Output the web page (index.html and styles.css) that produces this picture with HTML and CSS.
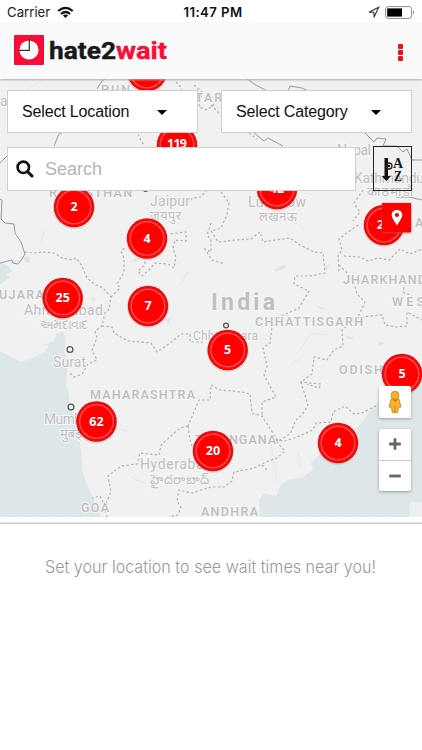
FILE: index.html
```html
<!DOCTYPE html>
<html lang="en">
<head>
<meta charset="utf-8">
<meta name="viewport" content="width=device-width, initial-scale=1">
<title>hate2wait</title>
<link rel="stylesheet" href="styles.css">
</head>
<body>
<div class="status">
  <div class="carrier"><span>Carrier</span>
    <svg width="17" height="13" viewBox="0 0 17 13"><g fill="none" stroke="#111" stroke-width="2.3"><path d="M1.3 5Q8.5-1.3 15.7 5M4 8Q8.500 4 13 8"/></g><path d="M5.900 9.400Q8.500 7.400 11.100 9.400L8.500 12Z" fill="#111"/></svg>
  </div>
  <strong class="time">11:47 PM</strong>
  <div class="power">
    <svg width="12" height="12" viewBox="0 0 12 12"><path d="M1 6.200L10.700 1.200L6.200 10.800L5.800 6.300Z" fill="none" stroke="#333" stroke-width="1.100"/></svg>
    <svg width="30" height="13" viewBox="0 0 30 13"><rect x=".6" y=".6" width="26" height="11.800" rx="2.500" fill="#fff" stroke="#8d8d8d"/><rect x="2.200" y="2.400" width="14.800" height="8.200" fill="#000"/><path d="M28 4.500Q30 6.500 28 8.500Z" fill="#777"/></svg>
  </div>
</div>
<header class="header">
  <svg class="logo" width="160" height="32" viewBox="0 0 160 32">
    <rect y="1" width="30" height="30" rx="1" fill="#f90d38"/><circle cx="15" cy="16" r="9.600" fill="#fff"/><path d="M4 16.300H15.300V5" fill="none" stroke="#333" stroke-width="1.200"/>
    <text x="35" y="24.500" class="logo-text" textLength="67" lengthAdjust="spacingAndGlyphs" fill="#191919" stroke="#191919">hate2</text>
    <text x="102" y="24.500" class="logo-text" textLength="51" lengthAdjust="spacingAndGlyphs" fill="#f90d38" stroke="#f90d38">wait</text>
  </svg>
  <div class="more"><i></i><i></i><i></i></div>
</header>
<main class="map">
  <svg class="canvas" width="422" height="438" viewBox="0 79 422 438">
    <rect y="79" width="422" height="438" fill="#f1f1f1"/>
    <g fill="#dde6e8">
      <path d="M0 351L13 358L21 362L31 359L45 352L49 346L43 345L54 341L57 333L63 332L66 339L64 351L68 362L66 385L69 396L74 421L80 443L83 475L90 492L97 506L101 517H0Z"/>
      <path d="M0 262L9 266L12 272L6 274L10 278L0 284Z"/>
      <path d="M422 366L406 383L389 393L374 406L358 427L332 443L311 463L313 470L301 478L288 480L281 485L276 496L264 493L259 500L260 517H422Z"/>
      <path d="M274 270L286 264L285 268L276 272ZM316 306L325 308L322 310ZM345 336L355 337L350 340ZM378 341L384 343L379 346ZM166 319L171 317L168 326ZM132 262L138 257L139 261ZM120 428L130 432L124 431ZM23 258L29 256L30 262L26 263ZM323 267L330 265L327 270ZM92 297L96 299L93 301Z"/>
    </g>
    <path d="M409 502H422V517H409Z" fill="#edf0f1"/>
    <g fill="none" stroke="#e6e8e8"><path d="M0 105L30 88L45 79M41 243L45 230M118 88L129 110L142 134M300 350L310 334L329 335M130 477L147 484M268 437L273 453L277 482M290 366L305 354M280 212L306 230M180 285L188 272M190 185L203 193M148 210L155 200M298 451L300 468M200 480L211 490"/></g>
    <g class="border-line">
      <path d="M0 199L2 200L1 219L5 223L14 224L15 233L21 242L25 254L22 259L18 264L13 263L12 260L0 263M0 163L7 156M54 146L59 134L64 132M97 89L102 81L105 79M247 79L256 85L267 91M288 91L290 86L302 88L308 91M253 132L264 141L268 138L283 146M365 133L374 142L377 138L386 139L383 146L397 146L403 152L407 149L412 160H422"/>
      <path d="M396 197L409 197L422 200"/>
    </g>
    <g class="state-line">
      <path d="M25 252L34 253L44 252L54 253L62 258L72 260L76 258L82 266L87 278L94 284L103 288L111 297L109 309L105 313L102 326L95 331L97 338L92 350L97 360L88 364L82 374L74 377L69 372"/>
      <path d="M111 297L120 288L117 284L124 272V258L121 251L126 247M145 257L145 265L138 271L142 276L149 270L155 263L168 264L174 268L176 257L173 248L175 240L186 241V232L169 234M102 326L112 327L114 333L128 341L151 343L157 352L170 343L181 334L190 334L190 342L204 342"/>
      <path d="M187 203L193 198L201 197L207 190M211 223L207 235L211 240V252L205 249L212 260L225 264M221 192L229 203L227 215L221 228L211 231L218 242L236 240L251 239L260 232L263 242L275 240L290 238L300 245L314 252L323 253L325 273L310 276L295 276L294 284L309 291L299 308L286 314L278 318L272 327L270 343L263 348L267 366L264 375L276 397L262 402L262 416"/>
      <path d="M339 271L338 256L342 250L339 239L348 232L360 224M344 256L360 257L368 261L378 258L389 260L400 249L410 254L422 249M339 265L353 279L357 294L365 302L359 315L342 330L343 346L334 350L327 360L314 357L312 374L301 382L308 405L302 415L296 420L290 434L278 441L262 416L252 413L250 394L242 392L220 390L211 385L210 400L199 400L191 419L188 426"/>
      <path d="M357 318L369 316L382 315L385 325L396 327L407 326L407 312L422 320M405 283L403 292L412 296M376 406L362 413L354 414L345 406L333 412L331 422L316 423L313 430L297 437L285 441L275 440L285 451L277 458L266 462L254 468L245 470L234 472L232 481L224 487L211 487L192 493L179 490L177 501L181 507L178 515L169 517M188 426L180 428L161 445L159 455L140 453L137 464L121 466L108 476L111 492L105 506L100 496L92 498M105 506L107 517M188 426L190 440L193 448M300 382L321 384L319 388L307 384M262 465L267 470"/>
      <path d="M138 134L141 141L145 146M176 82L182 88L181 92M194 85L202 92L199 107L207 110L217 102M211 105L223 117M249 133L257 139M363 190L354 203L360 212L353 221"/>
    </g>
    <g class="region">
      <text x="101" y="94" textLength="29">PUN</text><text x="176" y="102" textLength="46">UTTAR</text>
      <text x="49" y="197" textLength="83">RAJASTHAN</text><text x="-1" y="298.500" textLength="53">UJARAT</text>
      <text x="343" y="283.500" textLength="83">JHARKHAND</text><text x="392" y="306" textLength="32">WES</text>
      <text x="255" y="326" textLength="108">CHHATTISGARH</text><text x="90" y="399" textLength="105">MAHARASHTRA</text>
      <text x="339" y="373.500" textLength="54">ODISHA</text><text x="195" y="444" textLength="81">TELANGANA</text>
      <text x="81" y="512" textLength="28">GOA</text><text x="201" y="516" textLength="57">ANDHRA</text><text x="415" y="227">A</text>
    </g>
    <text x="211" y="310" class="country" textLength="64">India</text>
    <g class="city">
      <text x="0" y="106">a</text><text x="337" y="155" textLength="34">Nepal</text><text x="354" y="183" textLength="70">Kathmandu</text><text x="367" y="196" textLength="46" class="local">काठमाडौं</text>
      <text x="150" y="206" textLength="40">Jaipur</text><text x="150" y="220" textLength="31" class="local">जयपुर</text>
      <text x="248" y="207" textLength="58">Lucknow</text><text x="259" y="221" textLength="38" class="local">लखनऊ</text>
      <text x="24" y="315" textLength="79">Ahmedabad</text><text x="40" y="329" textLength="48" class="local">અમદાવાદ</text>
      <text x="53" y="366.500" textLength="33">Surat</text><text x="44" y="424" textLength="48">Mumbai</text><text x="60" y="438" class="local">मुंबई</text>
      <text x="140" y="469" textLength="72">Hyderabad</text><text x="150" y="484" textLength="59" class="local">హైదరాబాద్</text>
      <text x="193" y="340" textLength="65" class="small">Chhindwara</text>
    </g>
    <g fill="#f7f7f7" stroke="#555" stroke-width="1.300"><circle cx="70" cy="349.500" r="2.900"/><circle cx="71" cy="407" r="2.900"/><circle cx="226" cy="325.500" r="2.400"/><circle cx="145.500" cy="189" r="2.400"/></g>
    <defs><g id="pin"><circle cy="1" r="20.800" fill="#555" opacity=".18"/><circle r="20.200" fill="#f00909"/><circle r="16.800" fill="#fe0000" stroke="#ff4a4a" stroke-width="1.500"/></g></defs>
    <g class="pins">
      <g transform="translate(147 71)"><use href="#pin"/></g>
      <g transform="translate(177 145)"><use href="#pin"/><text y="3" textLength="20">119</text></g>
      <g transform="translate(74 207)"><use href="#pin"/><text y="4">2</text></g>
      <g transform="translate(277 189)"><use href="#pin"/><text y="4">42</text></g>
      <g transform="translate(147 238.500)"><use href="#pin"/><text y="4">4</text></g>
      <g transform="translate(384 225)"><use href="#pin"/><text y="4">26</text></g>
      <g transform="translate(62.700 298)"><use href="#pin"/><text y="4">25</text></g>
      <g transform="translate(148 306)"><use href="#pin"/><text y="4">7</text></g>
      <g transform="translate(227.700 350)"><use href="#pin"/><text y="4">5</text></g>
      <g transform="translate(402 374)"><use href="#pin"/><text y="4">5</text></g>
      <g transform="translate(96.500 421.500)"><use href="#pin"/><text y="4">62</text></g>
      <g transform="translate(213 451)"><use href="#pin"/><text y="4">20</text></g>
      <g transform="translate(338 443)"><use href="#pin"/><text y="4">4</text></g>
    </g>
  </svg>
  <div class="controls">
    <div class="row selects">
      <div class="box select"><span class="loc">Select Location</span><i class="caret"></i></div>
      <div class="box select category"><span class="cat">Select Category</span><i class="caret"></i></div>
    </div>
    <div class="row search-row">
      <div class="box search">
        <svg width="18" height="18" viewBox="0 0 18 18"><circle cx="7.300" cy="7.300" r="5.700" fill="none" stroke="#111" stroke-width="2.600"/><path d="M11.500 11.500L16 16" stroke="#111" stroke-width="3" stroke-linecap="round"/></svg>
        <span>Search</span>
      </div>
      <div class="sort"><svg width="37" height="43" viewBox="0 0 37 43"><path d="M10.500 11H14V29H17L12.300 34L7.700 29H10.500Z" fill="#111"/><circle cx="15" cy="19" r="3" fill="none" stroke="#222" stroke-width="1.300"/><circle cx="15" cy="19" r="1.200"/><text x="19" y="21" textLength="10" lengthAdjust="spacingAndGlyphs">A</text><text x="20" y="34" textLength="8" lengthAdjust="spacingAndGlyphs">Z</text></svg></div>
    </div>
    <div class="locate"><svg width="14" height="18" viewBox="0 0 14 18"><path d="M7 1C3.500 1 1.700 3.300 1.700 6C1.700 9 5 13 7 16.500C9 13 12.300 9 12.300 6C12.300 3.300 10.500 1 7 1Z" fill="#fff"/><circle cx="7" cy="6" r="2.100" fill="#e90000"/></svg></div>
    <div class="street"><svg width="16" height="24" viewBox="0 0 16 24"><g fill="#f5b32d" stroke="#c98720" stroke-width=".8"><path d="M4 9H12L14 17L11.500 17.500L10.700 22.500H5.300L4.500 17.500L2 17Z"/><circle cx="8" cy="5.300" r="4"/></g><path d="M5.500 9.500H10.500L8 12Z" fill="#ee6526"/><path d="M8 16V22" stroke="#c98720"/></svg></div>
    <div class="zoom">
      <div><svg width="12" height="12" viewBox="0 0 12 12"><path d="M6 .2V11.800M.2 6H11.800" stroke="#666" stroke-width="2.800"/></svg></div>
      <div><svg width="12" height="12" viewBox="0 0 12 12"><path d="M.2 6H11.800" stroke="#666" stroke-width="2.800"/></svg></div>
    </div>
  </div>
</main>
<section class="empty"><svg width="422" height="30"><text x="45" y="20.500" textLength="331" lengthAdjust="spacingAndGlyphs">Set your location to see wait times near you!</text></svg></section>
</body>
</html>
```
FILE: styles.css
```css
* { box-sizing: border-box; }
body { margin: 0; width: 422px; height: 750px; overflow: hidden; background: #fff; font-family: "Liberation Sans", sans-serif; }
svg { display: block; flex: none; }
.status { height: 23px; display: grid; grid-template-columns: 1fr auto 1fr; align-items: center; padding: 1px 7px 0 7px; color: #222; }
.carrier { display: flex; align-items: center; gap: 7px; font: 13.2px Inter, sans-serif; }
.time { font: 600 13.2px Inter, sans-serif; color: #111; letter-spacing: .4px; position: relative; left: 2px; }
.power { display: flex; justify-content: flex-end; align-items: center; gap: 5px; }
.header { height: 56px; background: #fafafa; display: flex; align-items: center; justify-content: space-between; padding: 0 19px 2px 14px; position: relative; z-index: 2; box-shadow: 0 1px 2px #aaa; }
.logo-text { font: 700 24px Roboto, sans-serif; stroke-width: .4px; }
.more { display: grid; gap: 1.6px; padding-top: 5px; }
.more i { width: 4.800px; height: 4.800px; border-radius: 1px; background: #ed1118; }
.map { position: relative; height: 438px; overflow: hidden; }
.canvas text { font-family: Roboto, "Noto Sans", "Noto Sans Devanagari", sans-serif; }
.border-line { fill: none; stroke: #999; stroke-width: 1; }
.state-line { fill: none; stroke: #b0b0b0; stroke-width: 1.200; stroke-dasharray: 2.300 2.300; }
.region { font-size: 12.500px; font-weight: 500; fill: #bdbdbd; stroke: #f6f6f6; stroke-width: 2px; paint-order: stroke; }
.city { font-size: 14px; fill: #bfbfbf; stroke: #f6f6f6; stroke-width: 2px; paint-order: stroke; }
.city .local { font-size: 13px; }
.city .small { font-size: 12px; }
.country { font-size: 23px; font-weight: 700; fill: #bfbfbf; stroke: #f6f6f6; stroke-width: 2px; paint-order: stroke; }
.canvas .pins text { font: 700 12.500px "Open Sans", sans-serif; text-anchor: middle; fill: #fff; }
.controls { position: absolute; inset: 0; padding: 11px 10px 0 7px; }
.row { display: flex; }
.box { background: #fff; border: 1px solid #d0d0d0; }
.selects { gap: 23px; }
.select { width: 192px; height: 43px; display: flex; align-items: center; padding: 1px 30px 0 14px; justify-content: space-between; font-size: 16px; letter-spacing: -.15px; color: #111; }
.caret { border: 5px solid transparent; border-top-color: #000; border-bottom: 0; }
.search-row { margin-top: 14px; justify-content: space-between; width: 405px; }
.search { width: 349px; height: 44px; display: flex; align-items: center; gap: 11px; padding-left: 8px; font-size: 18px; color: #b5b5b5; }
.search span { padding-top: 1px; }
.sort { width: 39px; height: 45px; margin-top: -1px; border: 1px solid #222; }
.sort text { font: 700 15px "Liberation Serif", serif; fill: #151515; }
.locate { display: grid; place-items: center; width: 29px; height: 29px; background: #fe0000; margin: 12px 1px 0 auto; box-shadow: 0 1px 2px #b44; }
.street, .zoom { width: 32px; margin-left: auto; margin-right: 1px; background: #fff; border-radius: 2px; box-shadow: 0 1px 3px #999; }
.street { height: 32px; display: grid; place-items: center; margin-top: 154px; }
.zoom { height: 62px; margin-top: 10.500px; }
.zoom div { height: 31px; display: grid; place-items: center; }
.zoom div + div { border-top: 1px solid #ccc; }
.empty { margin-top: 6px; border-top: 1px solid #ccc; box-shadow: 0 -1px 1px #e5e5e5; height: 227px; padding-top: 28px; }
.empty text { font: 300 17px Inter, sans-serif; fill: #999; }
```
